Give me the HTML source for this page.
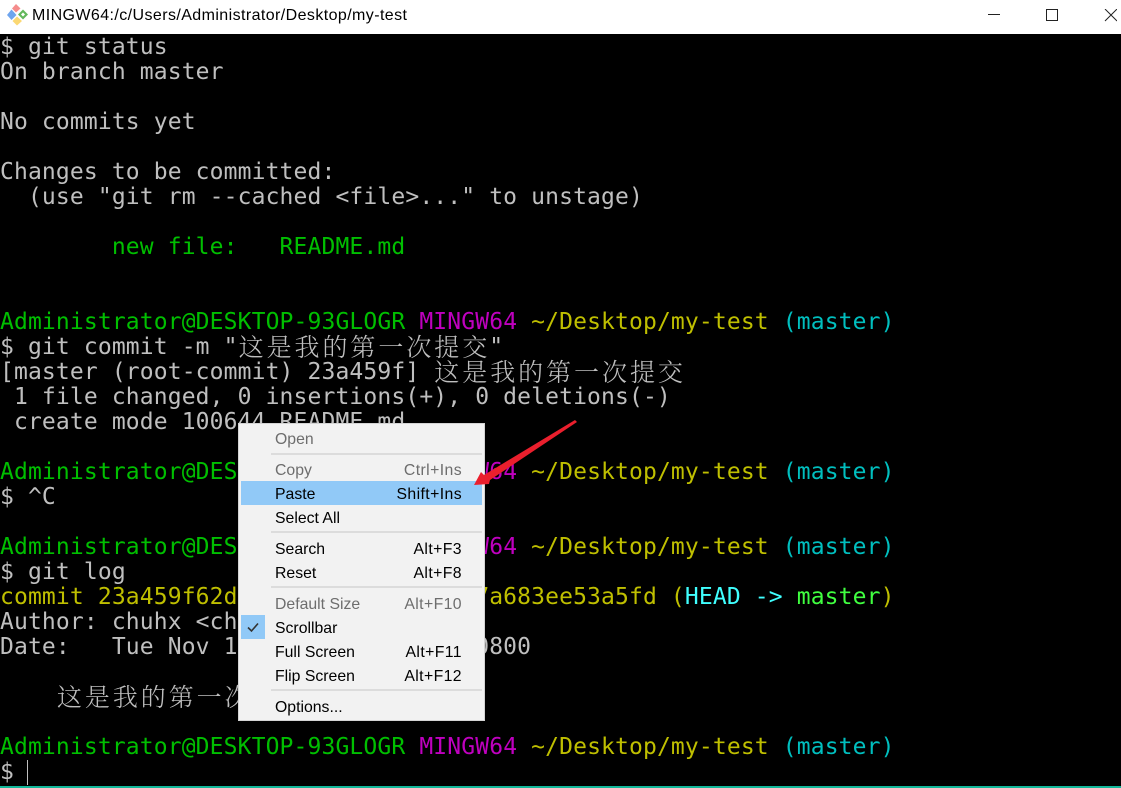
<!DOCTYPE html>
<html>
<head>
<meta charset="utf-8">
<style>
html,body{margin:0;padding:0;background:#fff}
body{width:1121px;height:788px;position:relative;overflow:hidden}
#title{position:absolute;left:0;top:0;width:1121px;height:34px;background:#fff}
#title span{position:absolute;left:32px;top:6px;font:16px/20px "Liberation Sans",sans-serif;letter-spacing:.41px;color:#000;white-space:nowrap}
#term{position:absolute;left:0;top:34px;width:1121px;height:752px;background:#000}
#line{position:absolute;left:0;top:786px;width:1121px;height:2px;background:#12b89a}
.l{position:absolute;left:0;height:25px;line-height:25px;margin-top:1px;white-space:pre;font-family:"DejaVu Sans Mono",monospace;font-size:23px;letter-spacing:.13px;color:#bfbfbf}
.g{color:#00bf00}.y{color:#bfbf00}.m{color:#bf00bf}.c{color:#00bfbf}.C{color:#40ffff}.G{color:#40ff40}
.z{font-family:"Noto Serif CJK SC",serif;font-size:25px;letter-spacing:2.95px;font-weight:300;line-height:0;position:relative;top:2px;left:1px}
#menu{position:absolute;left:238px;top:423px;width:247px;height:298px;background:#f2f2f2;box-shadow:inset 0 0 0 1px #d4d4d4}
#menu .hl{position:absolute;background:#91c9f7}
#menu .s{position:absolute;left:33px;width:211px;height:2px;background:#dcdcdc}
#menu .t,#menu .k{position:absolute;height:20px;line-height:20px;margin-top:2px;font-family:"Liberation Sans",sans-serif;font-size:15.8px;color:#000;white-space:nowrap}
#menu .t{left:37px}
#menu .k{right:23px;letter-spacing:.4px}
#menu .d{color:#6d6d6d}
svg{position:absolute}
</style>
</head>
<body>
<div id="title">
<svg style="left:0;top:0" width="30" height="34" viewBox="0 0 30 34">
<polygon points="16,4 20.5,8.5 16,12.5 12,8.5" fill="#f58c8c"/>
<polygon points="23,9.5 28,14.5 23,19.5 18,14.5" fill="#62b85c"/>
<polygon points="17,16.5 22,21 17,25.5 12.5,21" fill="#fbd873"/>
<polygon points="11.5,9.5 16.5,15 11.5,20 7,15" fill="#6fa5ee"/>
<polygon points="23,12.5 25,14.5 23,16.5 21,14.5" fill="#fff"/>
</svg>
<span>MINGW64:/c/Users/Administrator/Desktop/my-test</span>
<svg style="left:987px;top:9px" width="130" height="16" viewBox="0 0 130 16">
<path d="M1 5.5H13" stroke="#222" stroke-width="1" fill="none"/>
<rect x="59.5" y="0.5" width="11" height="11" stroke="#222" stroke-width="1" fill="none"/>
<path d="M118 0L130 12M130 0L118 12" stroke="#222" stroke-width="1" fill="none"/>
</svg>
</div>
<div id="term"></div>
<div id="line"></div>

<div class="l" style="top:34px">$ git status</div>
<div class="l" style="top:59px">On branch master</div>
<div class="l" style="top:109px">No commits yet</div>
<div class="l" style="top:159px">Changes to be committed:</div>
<div class="l" style="top:184px">  (use "git rm --cached &lt;file&gt;..." to unstage)</div>
<div class="l g" style="top:234px">        new file:   README.md</div>
<div class="l" style="top:309px"><span class="g">Administrator@DESKTOP-93GLOGR</span> <span class="m">MINGW64</span> <span class="y">~/Desktop/my-test</span> <span class="c">(master)</span></div>
<div class="l" style="top:334px">$ git commit -m "<span class="z">这是我的第一次提交</span>"</div>
<div class="l" style="top:359px">[master (root-commit) 23a459f] <span class="z">这是我的第一次提交</span></div>
<div class="l" style="top:384px"> 1 file changed, 0 insertions(+), 0 deletions(-)</div>
<div class="l" style="top:409px"> create mode 100644 README.md</div>
<div class="l" style="top:459px"><span class="g">Administrator@DESKTOP-93GLOGR</span> <span class="m">MINGW64</span> <span class="y">~/Desktop/my-test</span> <span class="c">(master)</span></div>
<div class="l" style="top:484px">$ ^C</div>
<div class="l" style="top:534px"><span class="g">Administrator@DESKTOP-93GLOGR</span> <span class="m">MINGW64</span> <span class="y">~/Desktop/my-test</span> <span class="c">(master)</span></div>
<div class="l" style="top:559px">$ git log</div>
<div class="l" style="top:584px"><span class="y">commit 23a459f62d3c1e8b04f92d6e1a47a683ee53a5fd (</span><span class="C">HEAD -&gt; </span><span class="G">master</span><span class="y">)</span></div>
<div class="l" style="top:609px">Author: chuhx &lt;chuhx@example.com&gt;</div>
<div class="l" style="top:634px">Date:   Tue Nov 13 15:08:12 2018 +0800</div>
<div class="l" style="top:684px">    <span class="z">这是我的第一次提交</span></div>
<div class="l" style="top:734px"><span class="g">Administrator@DESKTOP-93GLOGR</span> <span class="m">MINGW64</span> <span class="y">~/Desktop/my-test</span> <span class="c">(master)</span></div>
<div class="l" style="top:759px">$</div>
<svg style="left:26px;top:760px" width="3" height="25"><rect x="1" y="0" width="1" height="25" fill="#bfbfbf"/></svg>

<div id="menu">
<div class="hl" style="left:3px;top:58px;width:241px;height:24px"></div>
<div class="hl" style="left:3px;top:192px;width:24px;height:24px"></div>
<svg style="left:3px;top:192px" width="24" height="24" viewBox="0 0 24 24"><path d="M7 12.5L10.5 16L17 8.5" stroke="#333" stroke-width="1.6" fill="none"/></svg>
<div class="s" style="top:30px"></div>
<div class="s" style="top:108px"></div>
<div class="s" style="top:163px"></div>
<div class="s" style="top:266px"></div>
<div class="t d" style="top:5px">Open</div>
<div class="t d" style="top:36px">Copy</div><div class="k d" style="top:36px">Ctrl+Ins</div>
<div class="t" style="top:60px">Paste</div><div class="k" style="top:60px">Shift+Ins</div>
<div class="t" style="top:84px">Select All</div>
<div class="t" style="top:115px">Search</div><div class="k" style="top:115px">Alt+F3</div>
<div class="t" style="top:139px">Reset</div><div class="k" style="top:139px">Alt+F8</div>
<div class="t d" style="top:170px">Default Size</div><div class="k d" style="top:170px">Alt+F10</div>
<div class="t" style="top:194px">Scrollbar</div>
<div class="t" style="top:218px">Full Screen</div><div class="k" style="top:218px">Alt+F11</div>
<div class="t" style="top:242px">Flip Screen</div><div class="k" style="top:242px">Alt+F12</div>
<div class="t" style="top:273px">Options...</div>
</div>

<svg style="left:0;top:0" width="1121" height="788" viewBox="0 0 1121 788">
<polygon points="474,485 481,472 484,475 575,420 577,422 490,480 489,484" fill="#ea1f2d"/>
</svg>
</body>
</html>
